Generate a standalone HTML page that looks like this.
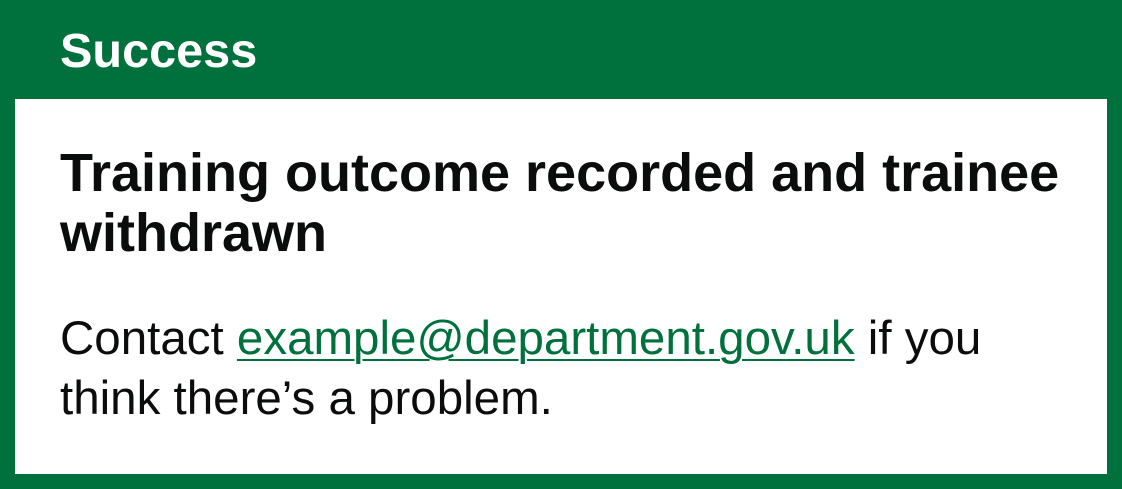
<!DOCTYPE html>
<html><head><meta charset="utf-8"><style>
html,body{margin:0;padding:0;width:1122px;height:489px;overflow:hidden;background:#00703c;font-family:"Liberation Sans",Arial,sans-serif;}
.t{position:absolute;left:60px;top:27px;font-size:48.6px;line-height:48px;font-weight:bold;color:#fff;margin:0;}
.b{position:absolute;left:15px;top:99px;width:1092px;height:375px;background:#fff;}
h2{position:absolute;left:45px;top:44px;margin:0;font-size:54px;line-height:60px;font-weight:bold;color:#0b0c0c;width:1040px;}
p{position:absolute;left:45px;top:210px;margin:0;font-size:47.5px;line-height:60px;color:#0b0c0c;width:1040px;white-space:nowrap;}
a{color:#00703c;text-decoration:underline;text-decoration-thickness:2px;text-underline-offset:5px;}
</style></head><body>
<div class="t">Success</div>
<div class="b">
<h2>Training outcome recorded and trainee withdrawn</h2>
<p>Contact <a>example@department.gov.uk</a> if you<br>think there’s a problem.</p>
</div>
</body></html>
